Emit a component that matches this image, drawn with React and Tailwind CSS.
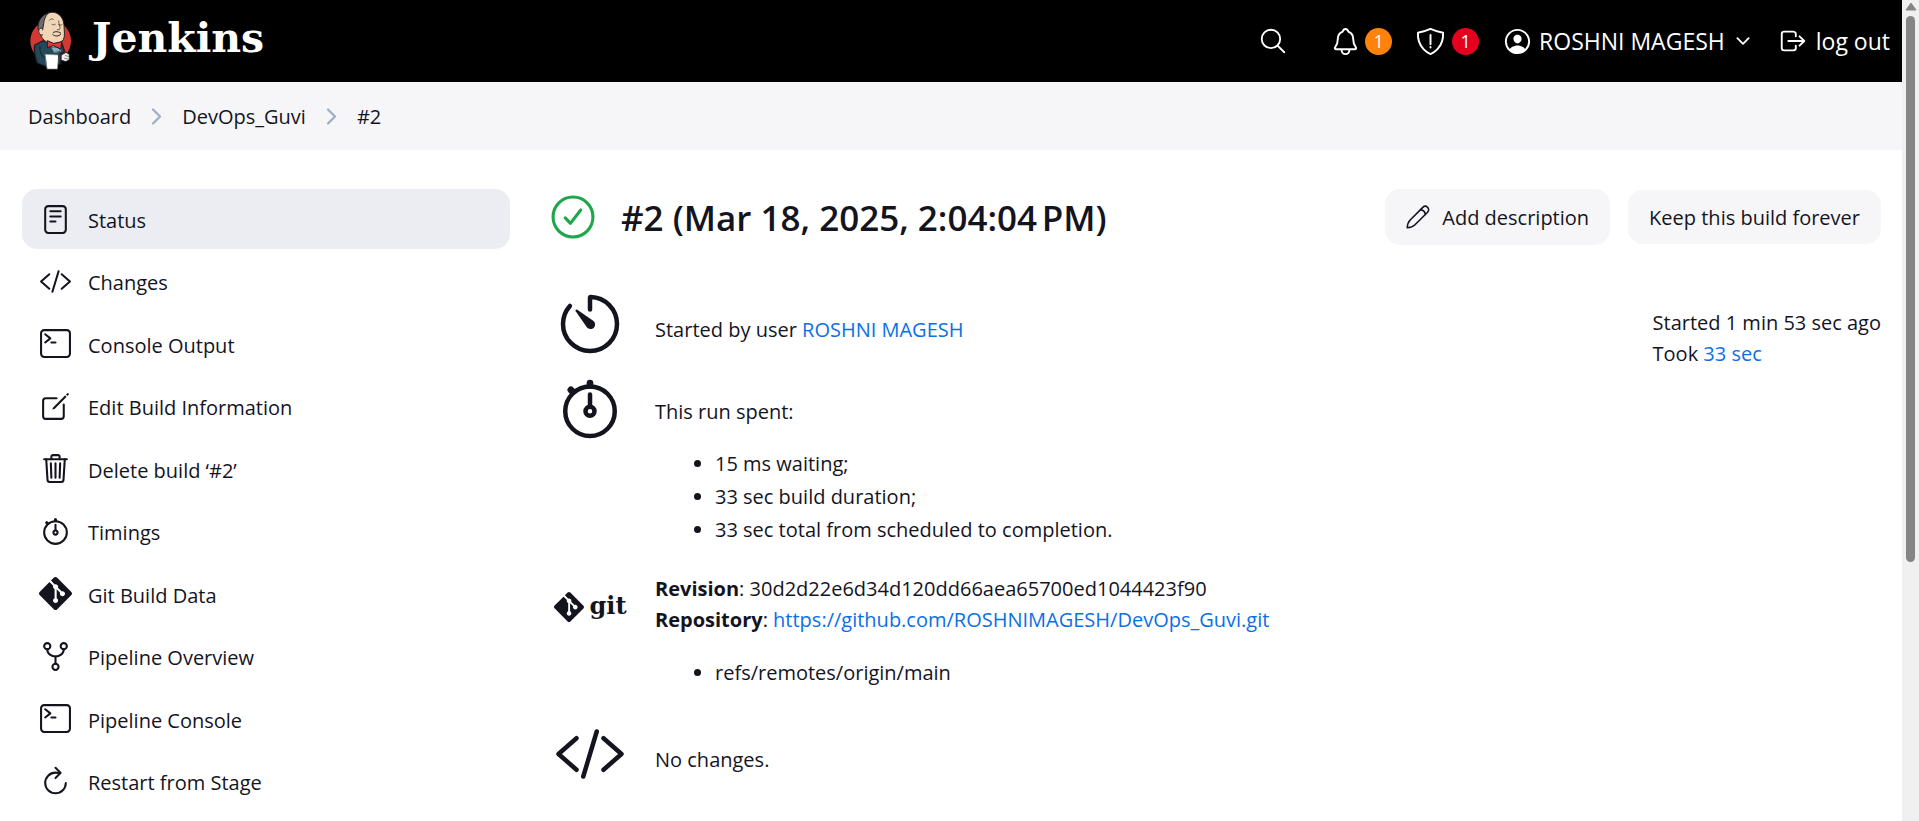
import React from "react";
import {
  IoReaderOutline,
  IoCodeSlashOutline,
  IoTerminalOutline,
  IoCreateOutline,
  IoTrashOutline,
  IoStopwatchOutline,
  IoGitNetworkOutline,
  IoRefreshOutline,
  IoSearchOutline,
  IoNotificationsOutline,
  IoPersonCircleOutline,
  IoChevronDown,
  IoLogOutOutline,
  IoTimerOutline,
  IoChevronForwardOutline,
} from "react-icons/io5";
import { SiGit } from "react-icons/si";

function Mascot() {
  return (
    <svg viewBox="0 0 144 192" className="h-16 w-12 shrink-0" strokeLinejoin="round" strokeLinecap="round" aria-hidden="true">
      <ellipse cx="74" cy="96" rx="61" ry="62" fill="#d33833" />
      <path d="M50 96 26 108C24 122 27 144 34 162L64 174 104 164 104 134 116 128 108 104Z" fill="#24495a" stroke="#1c1c22" strokeWidth="4" />
      <path d="M42 112C40 126 46 140 56 148" fill="none" stroke="#1c1c22" strokeWidth="3" />
      <path d="M66 100 102 104 104 128 84 132Z" fill="#f2f2f2" />
      <path d="M76 114 100 114 102 128 84 130Z" fill="#81b0c4" stroke="#1c1c22" strokeWidth="2" />
      <path d="M42 56C38 78 50 94 68 102C84 108 102 104 112 92C118 82 114 64 114 48C112 22 94 8 76 10C54 12 44 30 42 56Z" fill="#f0d6b7" stroke="#2a2322" strokeWidth="3" />
      <path d="M66 13C50 18 36 32 36 56C36 62 40 66 44 68L50 62 53 44C54 32 58 22 66 13Z" fill="#6d6b6d" stroke="#2a2322" strokeWidth="3" />
      <path d="M48 58C34 54 34 80 50 78" fill="#f0d6b7" stroke="#2a2322" strokeWidth="3" />
      <path d="M70 34C74 29 78 28 82 31M78 46C81 48 85 48 88 46M98 47C101 49 105 49 108 47M98 36C98 48 106 58 100 62L94 62" fill="none" stroke="#2a2322" strokeWidth="2" />
      <path d="M82 70C90 66 98 68 104 72M80 76C88 84 98 82 104 76" fill="none" stroke="#2a2322" strokeWidth="3" />
      <path d="M64 96 64 116 82 110 104 120 108 98 84 103Z" fill="#e0373a" stroke="#1c1c22" strokeWidth="3" />
      <path d="M58 136 98 138 94 180 64 180Z" fill="#ffffff" stroke="#8b8b8b" strokeWidth="2" />
      <path d="M98 138 104 134 108 150 100 160Z" fill="#24495a" stroke="#1c1c22" strokeWidth="2" />
      <path d="M106 138 120 130 130 136 130 152 120 158 106 154Z" fill="#f4f1ec" stroke="#1c1c22" strokeWidth="3" />
      <path d="M118 140 128 142M116 148 126 150" stroke="#55504d" strokeWidth="2" />
    </svg>
  );
}

function ShieldAlert() {
  return (
    <svg viewBox="0 0 512 512" className="size-[31px]" fill="none" stroke="currentColor" strokeWidth="32" strokeLinecap="round" strokeLinejoin="round" aria-hidden="true">
      <path d="M463.1 112.37C373.68 96.33 336.71 84.45 256 48c-80.71 36.45-117.68 48.33-207.1 64.37C32.7 369.13 240.58 457.79 256 464c15.42-6.21 223.3-94.87 207.1-351.63z" />
      <path d="M256 150v150M256 348v6" />
    </svg>
  );
}

function SuccessIcon() {
  return (
    <svg viewBox="0 0 512 512" className="size-[44px] shrink-0" fill="none" stroke="#1ea64b" strokeWidth="36" strokeLinecap="round" strokeLinejoin="round" role="img" aria-label="Success">
      <circle cx="256" cy="256" r="232" />
      <path d="M346 174 226 330 166 266" />
    </svg>
  );
}

function PencilIcon() {
  return (
    <svg viewBox="0 0 240 240" className="size-6" fill="none" stroke="currentColor" strokeWidth="16" strokeLinecap="round" strokeLinejoin="round" aria-hidden="true">
      <path d="M12 228C14 196 20 172 42 150L168 24C182 10 202 10 216 24C230 38 230 58 216 72L90 198C68 220 44 226 12 228Z" />
      <path d="M146 46C168 50 190 72 194 94" />
    </svg>
  );
}

const menu = [
  ["Status", IoReaderOutline],
  ["Changes", IoCodeSlashOutline],
  ["Console Output", IoTerminalOutline],
  ["Edit Build Information", IoCreateOutline],
  ["Delete build ‘#2’", IoTrashOutline],
  ["Timings", IoStopwatchOutline],
  ["Git Build Data", SiGit],
  ["Pipeline Overview", IoGitNetworkOutline],
  ["Pipeline Console", IoTerminalOutline],
  ["Restart from Stage", IoRefreshOutline],
];

function Header() {
  return (
    <header className="flex h-[82px] items-center justify-between bg-black pr-3 pl-[26px] text-white">
      <a href="#home" className="flex items-center gap-[18px]">
        <Mascot />
        <span className="pb-1.5 font-['DejaVu_Serif',serif] text-[41px] leading-[48px] font-bold">Jenkins</span>
      </a>
      <div className="flex items-center text-[23px]">
        <button aria-label="Search" className="mr-[42px]"><IoSearchOutline size={30} /></button>
        <button aria-label="Notifications" className="mr-[23px] flex items-center gap-1">
          <IoNotificationsOutline size={31} />
          <span className="flex size-[27px] items-center justify-center rounded-full bg-[#ff820a] text-lg">1</span>
        </button>
        <button aria-label="Security warnings" className="mr-[23px] flex items-center gap-1.5">
          <ShieldAlert />
          <span className="flex size-[27px] items-center justify-center rounded-full bg-[#e6001f] text-lg">1</span>
        </button>
        <a href="#user" className="flex items-center gap-1.5"><IoPersonCircleOutline size={31} />ROSHNI MAGESH</a>
        <button aria-label="User menu" className="mr-[25px] ml-2"><IoChevronDown size={20} /></button>
        <a href="#logout" className="flex items-center gap-2"><IoLogOutOutline size={30} />log out</a>
      </div>
    </header>
  );
}

function Breadcrumbs() {
  return (
    <nav aria-label="Breadcrumb" className="flex h-[68px] items-center gap-[13px] bg-[#f6f6f8] px-7">
      <a href="#dashboard">Dashboard</a>
      <IoChevronForwardOutline size={25} className="text-[#9fb0c6]" />
      <a href="#project">DevOps_Guvi</a>
      <IoChevronForwardOutline size={25} className="text-[#9fb0c6]" />
      <a href="#build">#2</a>
    </nav>
  );
}

function Sidebar() {
  return (
    <nav aria-label="Build" className="flex min-h-[622px] w-[488px] shrink-0 flex-col justify-between">
      {menu.map(([label, Icon], i) => (
        <a
          key={label}
          href="#task"
          className={"flex h-[60px] items-center gap-4 rounded-[15px] px-[17px] " + (i === 0 ? "bg-[#ecedf3]" : "")}
        >
          <Icon size={33} />
          <span className="pt-[3px]">{label}</span>
        </a>
      ))}
    </nav>
  );
}

function Row({ icon, children }) {
  return (
    <div className="flex gap-[26px]">
      <div className="flex w-[78px] shrink-0 justify-center">{icon}</div>
      <div>{children}</div>
    </div>
  );
}

function Summary() {
  return (
    <div>
      <div className="pb-[13px]">
        <Row icon={<IoTimerOutline size={72} />}>
          <p className="pt-[26px]">Started by user <a href="#user" className="text-[#0b6fe8]">ROSHNI MAGESH</a></p>
        </Row>
      </div>
      <Row icon={<IoStopwatchOutline size={72} />}>
        <p className="pt-[23px]">This run spent:</p>
        <ul className="mt-[21px] flex list-disc flex-col gap-[2px] pl-[60px]">
          <li>15 ms waiting;</li>
          <li>33 sec build duration;</li>
          <li>33 sec total from scheduled to completion.</li>
        </ul>
      </Row>
      <div className="pt-7 pb-[30px]">
        <Row
          icon={
            <div className="mt-4 flex h-9 items-center gap-1.5">
              <SiGit size={30} />
              <span className="pb-1 font-['DejaVu_Serif',serif] text-[24px] leading-[31px] font-bold">git</span>
            </div>
          }
        >
          <p><b>Revision</b>: 30d2d22e6d34d120dd66aea65700ed1044423f90</p>
          <p><b>Repository</b>: <a href="#repo" className="text-[#0b6fe8]">https://github.com/ROSHNIMAGESH/DevOps_Guvi.git</a></p>
          <ul className="mt-[22px] list-disc pl-[60px]">
            <li>refs/remotes/origin/main</li>
          </ul>
        </Row>
      </div>
      <Row icon={<IoCodeSlashOutline size={72} />}>
        <p className="pt-[26px]">No changes.</p>
      </Row>
    </div>
  );
}

export default function App() {
  return (
    <div className="flex h-screen overflow-hidden bg-white font-['Open_Sans','Noto_Sans',sans-serif] text-[20px] leading-[31px] text-[#14141f]">
      <div className="min-w-0 flex-1">
        <Header />
        <Breadcrumbs />
        <div className="flex gap-[41px] pt-[39px] pr-[21px] pl-[22px]">
          <Sidebar />
          <main className="min-w-0 flex-1">
            <div className="flex h-14 items-center justify-between">
              <div className="flex items-center gap-[26px]">
                <SuccessIcon />
                <h1 className="pt-0.5 text-[35px] leading-[44px] font-semibold">#2 (Mar 18, 2025, 2:04:04&#8239;PM)</h1>
              </div>
              <div className="flex items-center gap-[18px]">
                <button className="flex h-14 items-center gap-3 rounded-[15px] bg-[#f6f6f9] px-[21px]">
                  <PencilIcon />
                  Add description
                </button>
                <button className="h-[54px] rounded-[15px] bg-[#f6f6f9] px-[21px]">Keep this build forever</button>
              </div>
            </div>
            <div className="flex justify-between pt-[43px]">
              <Summary />
              <div className="pt-[19px]">
                <p>Started 1 min 53 sec ago</p>
                <p>Took <a href="#trend" className="text-[#0b6fe8]">33 sec</a></p>
              </div>
            </div>
          </main>
        </div>
      </div>
      <div className="flex w-[17px] shrink-0 flex-col items-center bg-[#f0f0f0] pt-[2px]" aria-hidden="true">
        <svg viewBox="0 0 12 9" className="h-[9px] w-3"><path d="M6 1 11 8H1Z" fill="#858585" stroke="#858585" strokeLinejoin="round" /></svg>
        <div className="mt-[5px] h-[546px] w-[9px] rounded-full bg-[#858585]" />
      </div>
    </div>
  );
}
